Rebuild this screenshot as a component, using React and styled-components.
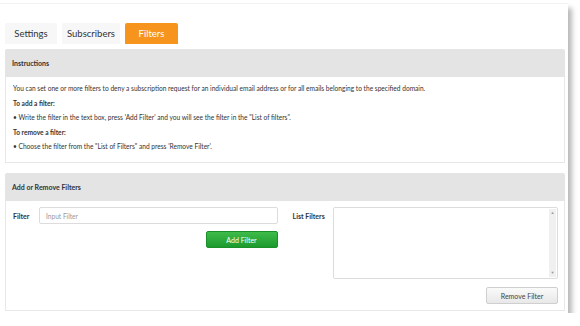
import React from "react";
import styled, { createGlobalStyle } from "styled-components";

const Global = createGlobalStyle`
  html, body { margin: 0; padding: 0; background: #fff; }
  body { font-family: Lato, "Open Sans", sans-serif; color: #333; }
  * { box-sizing: border-box; }
`;

const Card = styled.div`
  margin: 3px 0 0 0;
  width: 568px;
  height: 310px;
  background: #fff;
  border-top: 1px solid #f2f2f2;
  box-shadow: 4px 5px 5px rgba(0, 0, 0, 0.28);
  padding: 19px 3px 0 5px;
  display: flex;
  flex-direction: column;
`;

const Tabs = styled.div`
  display: flex;
  gap: 5px;
  height: 21px;
  margin-bottom: 5px;
`;

const Tab = styled.div`
  width: ${(p) => p.w}px;
  display: flex;
  align-items: center;
  justify-content: center;
  font-size: 9.5px;
  border-radius: 2px 2px 0 0;
  background: ${(p) => (p.active ? "#f7941d" : "#f7f7f7")};
  color: ${(p) => (p.active ? "#fff" : "#333")};
`;

const Panel = styled.div`
  width: 560px;
  display: flex;
  flex-direction: column;
  margin-bottom: ${(p) => p.mb || 0}px;
`;

const PanelHeader = styled.div`
  height: 28px;
  background: #e4e4e4;
  border-radius: 2px 2px 0 0;
  display: flex;
  align-items: center;
  padding-left: 7px;
  font-size: 7px;
  font-weight: 700;
  color: #333;
`;

const PanelBody = styled.div`
  border: 1px solid #e8e8e8;
  border-top: none;
  height: ${(p) => p.h}px;
  padding: ${(p) => p.pad || "0"};
`;

const Line = styled.div`
  font-size: 6.6px;
  line-height: 14.5px;
  font-weight: ${(p) => (p.bold ? 700 : 400)};
  color: #333;
`;

const FormGrid = styled.div`
  display: flex;
  padding: 6px 6px 0 7px;
`;

const Col = styled.div`
  display: flex;
  flex-direction: column;
  align-items: flex-end;
  width: ${(p) => p.w}px;
  margin-left: ${(p) => p.ml || 0}px;
`;

const Row = styled.div`
  display: flex;
  align-items: flex-start;
  width: 100%;
`;

const Label = styled.div`
  font-size: 7px;
  font-weight: 700;
  width: ${(p) => p.w}px;
  padding-top: 5px;
`;

const Input = styled.div`
  flex: 1;
  height: 17px;
  border: 1px solid #dcdcdc;
  border-radius: 2px;
  font-size: 6.6px;
  color: #999;
  display: flex;
  align-items: center;
  padding-left: 6px;
`;

const ListBox = styled.div`
  flex: 1;
  height: 72px;
  border: 1px solid #dcdcdc;
  border-radius: 2px;
  display: flex;
  justify-content: flex-end;
`;

const ScrollBar = styled.div`
  width: 7px;
  margin: 1px;
  background: #f0f0f0;
  display: flex;
  flex-direction: column;
  justify-content: space-between;
  align-items: center;
  padding: 2px 0;
  font-size: 4px;
  color: #999;
  line-height: 4px;
`;

const Button = styled.div`
  width: ${(p) => p.w}px;
  height: 17px;
  margin-top: ${(p) => p.mt}px;
  border-radius: 2px;
  display: flex;
  align-items: center;
  justify-content: center;
  font-size: 7px;
  ${(p) =>
    p.green
      ? `background: linear-gradient(#3fbb4a, #1d9a2d); color: #fff; border: 1px solid #1b8f2a;`
      : `background: linear-gradient(#fafafa, #e8e8e8); color: #444; border: 1px solid #cfcfcf;`}
`;

export default function App() {
  return (
    <>
      <Global />
      <Card>
        <Tabs>
          <Tab w={52}>Settings</Tab>
          <Tab w={58}>Subscribers</Tab>
          <Tab w={53} active>Filters</Tab>
        </Tabs>
        <Panel mb={10}>
          <PanelHeader>Instructions</PanelHeader>
          <PanelBody h={86} pad="4px 7px">
            <Line>
              You can set one or more filters to deny a subscription request for an individual email address or for all emails belonging to the specified domain.
            </Line>
            <Line bold>To add a filter:</Line>
            <Line>• Write the filter in the text box, press 'Add Filter' and you will see the filter in the "List of filters".</Line>
            <Line bold>To remove a filter:</Line>
            <Line>• Choose the filter from the "List of Filters" and press 'Remove Filter'.</Line>
          </PanelBody>
        </Panel>
        <Panel>
          <PanelHeader>Add or Remove Filters</PanelHeader>
          <PanelBody h={110}>
            <FormGrid>
              <Col w={265}>
                <Row>
                  <Label w={26}>Filter</Label>
                  <Input>Input Filter</Input>
                </Row>
                <Button green w={72} mt={7}>Add Filter</Button>
              </Col>
              <Col w={266} ml={15}>
                <Row>
                  <Label w={40}>List Filters</Label>
                  <ListBox>
                    <ScrollBar>
                      <span>▲</span>
                      <span>▼</span>
                    </ScrollBar>
                  </ListBox>
                </Row>
                <Button w={72} mt={8}>Remove Filter</Button>
              </Col>
            </FormGrid>
          </PanelBody>
        </Panel>
      </Card>
    </>
  );
}
